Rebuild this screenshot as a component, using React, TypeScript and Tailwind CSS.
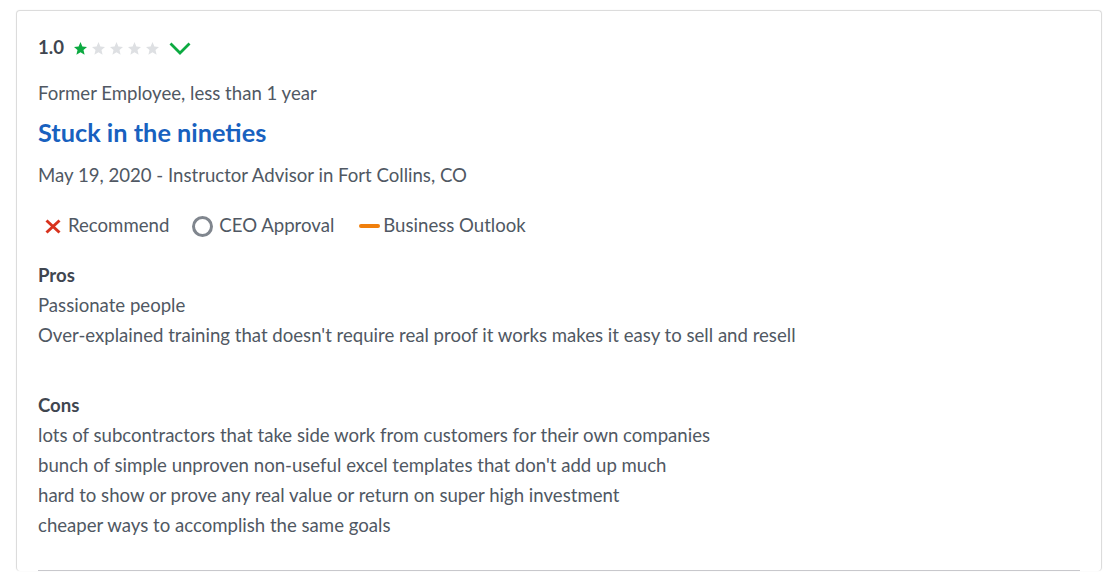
import React from 'react';

const Star: React.FC<{ on?: boolean }> = ({ on }) => (
  <svg viewBox="2 2 20 20" className={`h-[13px] w-[13px] ${on ? 'text-[#0caa41]' : 'text-[#dee0e3]'}`} fill="currentColor">
    <path d="M12 2l2.9 6.9 7.1.6-5.4 4.7 1.7 7.3L12 17.6 5.7 21.5l1.7-7.3L2 9.5l7.1-.6z" />
  </svg>
);

const pros = [
  'Passionate people',
  "Over-explained training that doesn't require real proof it works makes it easy to sell and resell",
];

const cons = [
  'lots of subcontractors that take side work from customers for their own companies',
  "bunch of simple unproven non-useful excel templates that don't add up much",
  'hard to show or prove any real value or return on super high investment',
  'cheaper ways to accomplish the same goals',
];

export default function App() {
  return (
    <div className="min-h-[580px] bg-white pl-[16px] pr-[8px] pt-[10px] font-['Lato',sans-serif] text-[18.6px] text-[#505863]">
      <div className="rounded-[4px] border border-[#dcdcdc] border-b-0 px-[21px] pt-[24px] shadow-[0_0_2px_rgba(0,0,0,0.06)]">
        {/* Rating */}
        <div className="flex h-[26px] items-center">
          <span className="mr-[10px] text-[18.6px] font-bold text-[#3f4650]">1.0</span>
          <div className="flex items-center gap-[5px]">
            <Star on />
            <Star />
            <Star />
            <Star />
            <Star />
          </div>
          <svg viewBox="0 0 22 13" className="ml-[10px] h-[13px] w-[22px] text-[#0caa41]" fill="none" stroke="currentColor" strokeWidth="2.8">
            <path d="M1.5 1.5l9.5 9.5 9.5-9.5" />
          </svg>
        </div>

        <div className="mt-[19px] leading-[26px]">Former Employee, less than 1 year</div>

        <h2 className="mt-[11px] text-[25.3px] font-bold leading-[30px] text-[#1861bf]">Stuck in the nineties</h2>

        <div className="mt-[15px] leading-[26px]">May 19, 2020 - Instructor Advisor in Fort Collins, CO</div>

        {/* Ratings row */}
        <div className="mt-[25px] flex h-[26px] items-center">
          <div className="mr-[23px] flex items-center">
            <svg viewBox="0 0 16 15" className="ml-[7px] mr-[7px] h-[15px] w-[16px] text-[#d8321d]" fill="none" stroke="currentColor" strokeWidth="3">
              <path d="M1.5 1.5l13 12M14.5 1.5l-13 12" />
            </svg>
            <span>Recommend</span>
          </div>
          <div className="mr-[25px] flex items-center">
            <span className="mr-[6px] h-[21px] w-[21px] rounded-full border-[3.5px] border-[#80868e]" />
            <span>CEO Approval</span>
          </div>
          <div className="flex items-center">
            <span className="mr-[3px] h-[4px] w-[21px] rounded-full bg-[#f07f0c]" />
            <span>Business Outlook</span>
          </div>
        </div>

        {/* Pros */}
        <div className="mt-[21px]">
          <div className="font-bold leading-[30px] text-[#3f4650]">Pros</div>
          {pros.map((p) => (
            <div key={p} className="leading-[30px]">{p}</div>
          ))}
        </div>

        {/* Cons */}
        <div className="mt-[40px]">
          <div className="font-bold leading-[30px] text-[#3f4650]">Cons</div>
          {cons.map((c) => (
            <div key={c} className="leading-[30px]">{c}</div>
          ))}
        </div>

        <div className="mt-[30px] border-t border-[#c8c8cc]" />
      </div>
    </div>
  );
}
